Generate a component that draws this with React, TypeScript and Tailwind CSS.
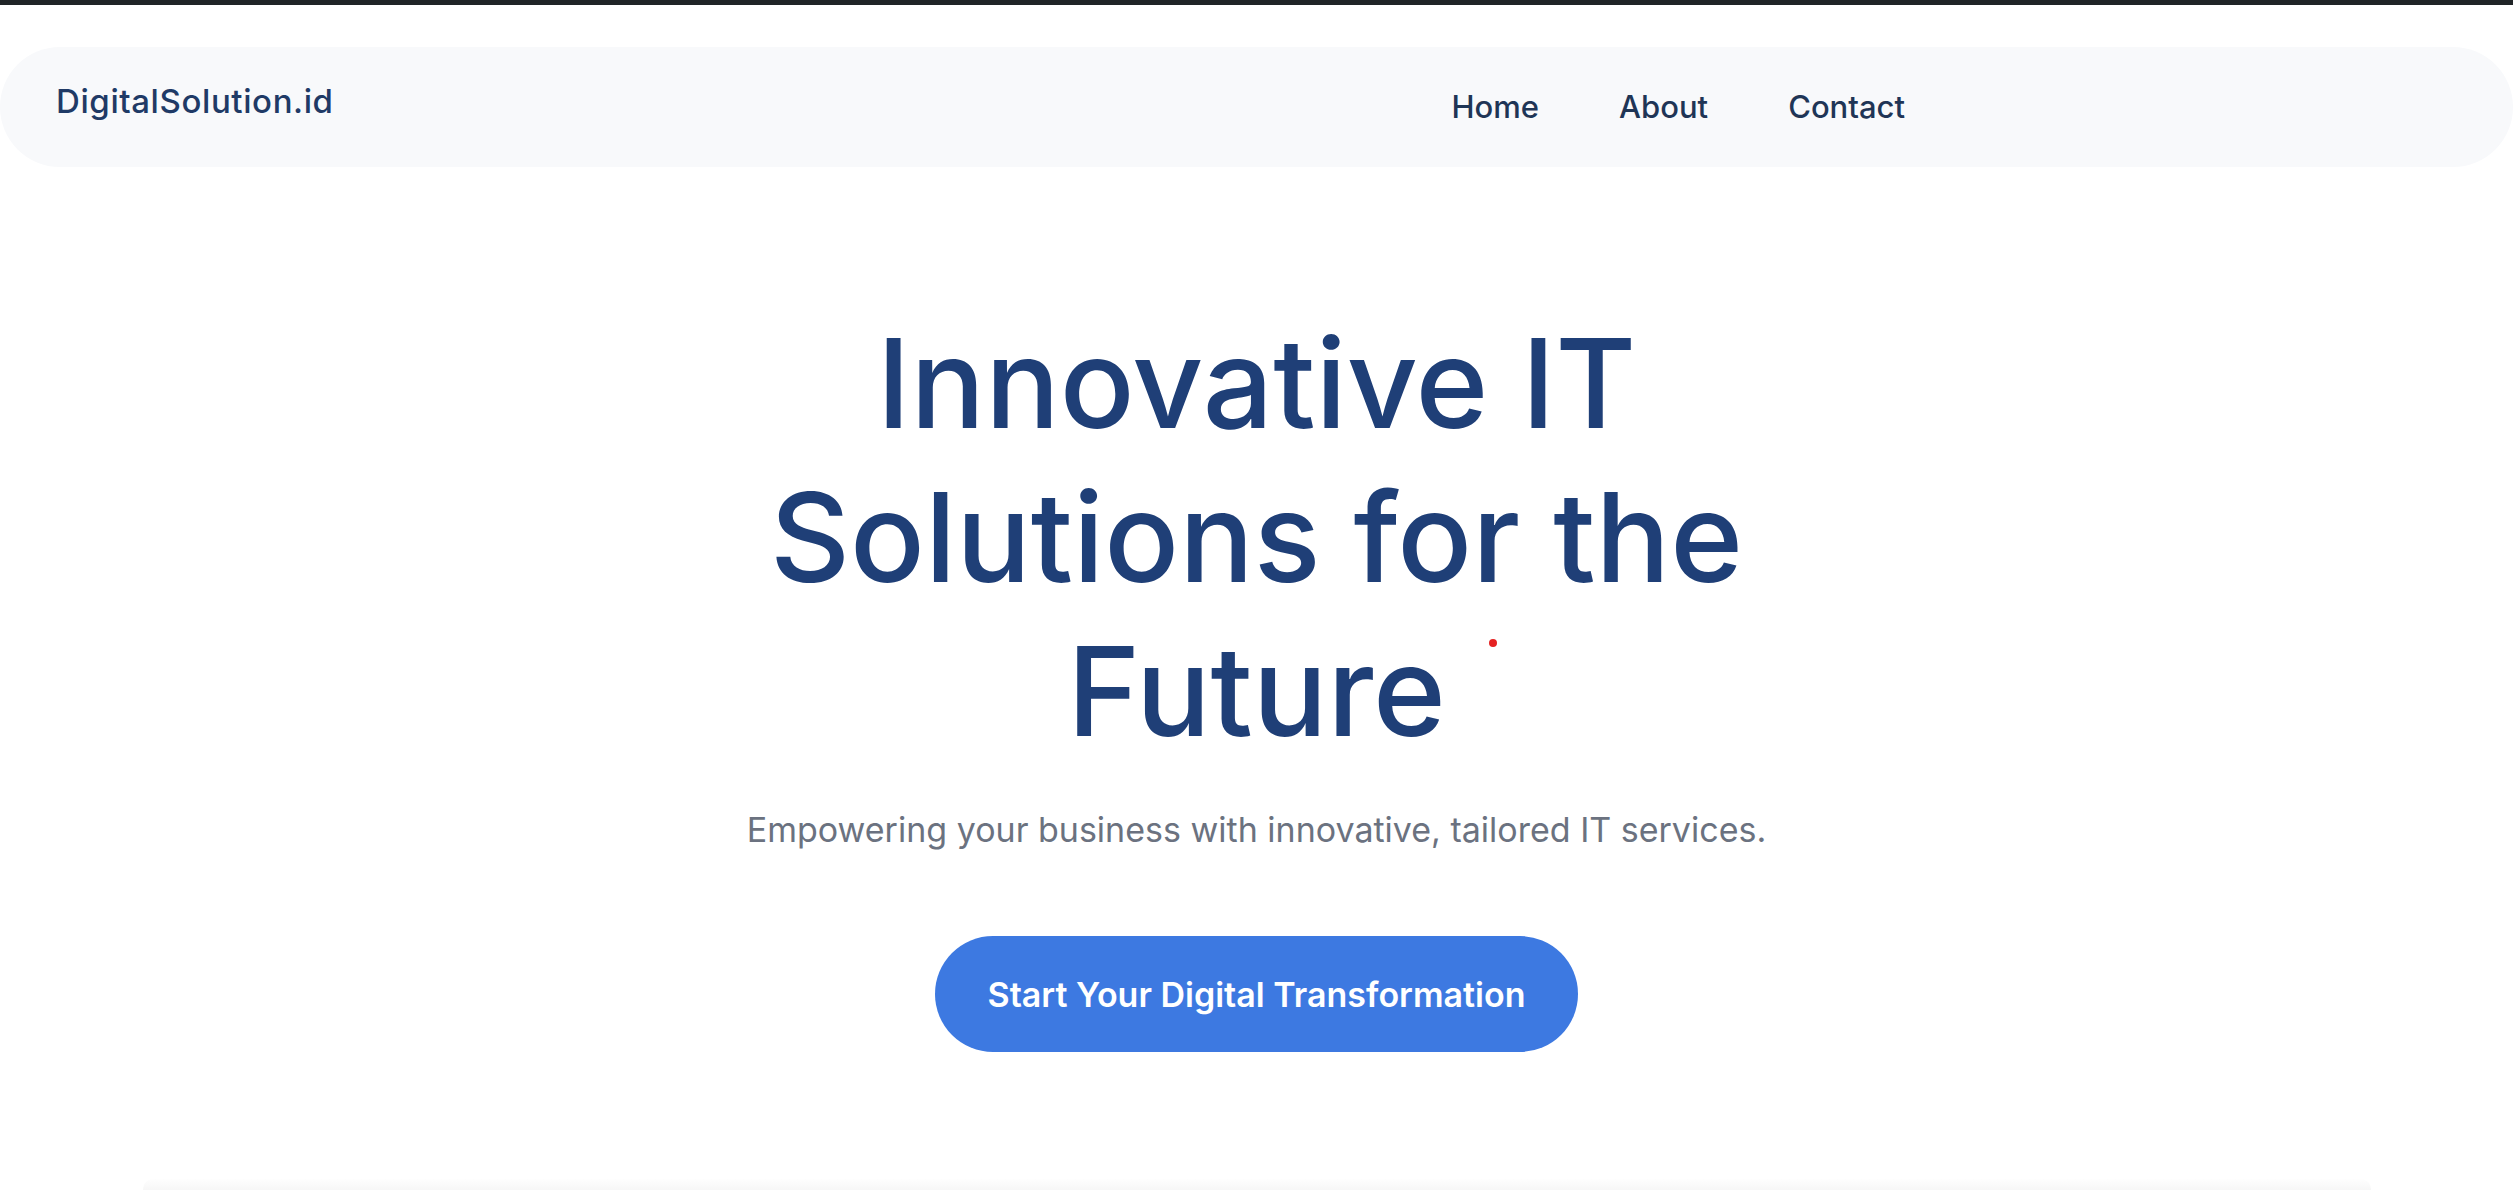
import React from "react";

export default function App() {
  return (
    <div
      className="relative min-h-[1190px] w-full overflow-hidden bg-white"
      style={{ fontFamily: "Inter, 'Noto Sans', sans-serif" }}
    >
      <div className="h-[5px] w-full bg-[#202427]" />

      <nav className="mt-[42px] flex h-[120px] items-center rounded-full bg-[#f8f9fb]">
        <div className="mb-[10px] ml-[56px] text-[33px] font-medium tracking-[0.6px] text-[#1f3a66]">
          DigitalSolution.id
        </div>
        <div className="ml-auto mr-[608px] flex items-center gap-[80px] text-[31px] font-medium text-[#1f3556]">
          <a href="#">Home</a>
          <a href="#">About</a>
          <a href="#">Contact</a>
        </div>
      </nav>

      <main className="flex flex-col items-center">
        <h1 className="mt-[139px] text-center text-[124px] font-medium leading-[154px] text-[#1f3f77]">
          Innovative IT
          <br />
          Solutions for the
          <br />
          Future
        </h1>
        <p className="mt-[38px] text-center text-[34px] leading-[48px] text-[#6b7280]">
          Empowering your business with innovative, tailored IT services.
        </p>
        <button className="mt-[82px] flex h-[116px] w-[643px] items-center justify-center rounded-full bg-[#3d79e1] text-[34px] font-semibold text-white">
          Start Your Digital Transformation
        </button>
        <div className="mt-[127px] h-[12px] w-[2228px] rounded-t-[10px] bg-gradient-to-b from-[#fefefe] to-[#f6f6f6]" />
      </main>

      <span className="absolute left-[1489px] top-[639px] h-[8px] w-[8px] rounded-full bg-[#e52222]" />
    </div>
  );
}
